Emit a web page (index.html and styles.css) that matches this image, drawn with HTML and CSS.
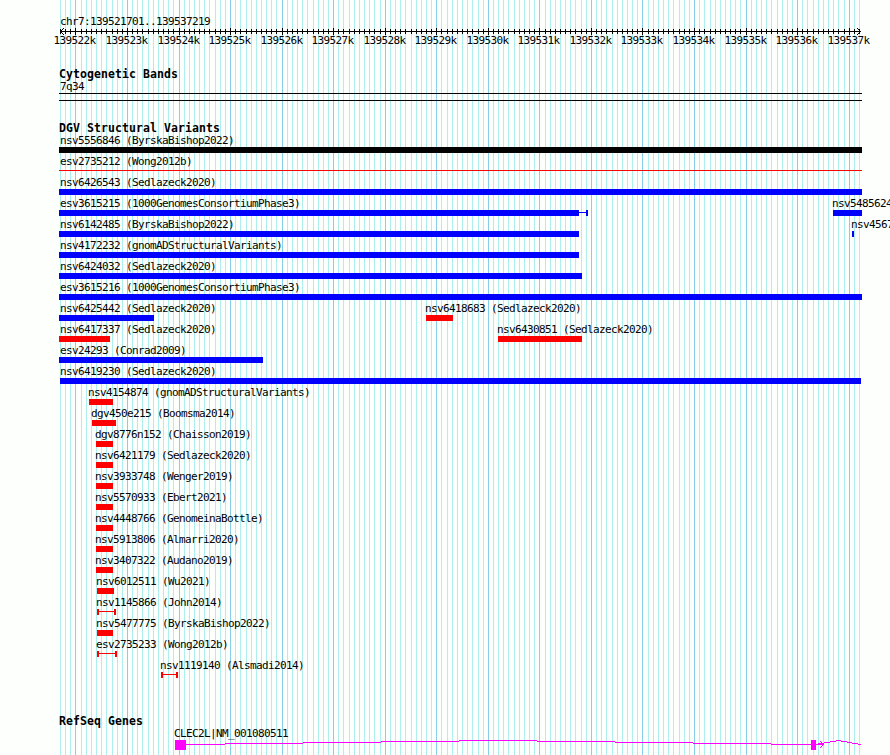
FILE: index.html
```
<!DOCTYPE html>
<html lang="en">
<head>
<meta charset="utf-8">
<title>chr7:139521701..139537219</title>
<link rel="stylesheet" href="styles.css">
</head>
<body>
<main class="browser">
  <svg class="grid" width="890" height="755" shape-rendering="crispEdges" aria-hidden="true">
    <path class="minor" id="minor"/>
    <path class="major" id="major"/>
  </svg>
  <header class="ruler">
    <div class="region">chr7:139521701..139537219</div>
    <svg class="axis" width="890" height="9" shape-rendering="crispEdges">
      <path id="ticks" class="ink"/>
      <path class="ink" d="M60 4h801v1h-801zM61 3h1v3h-1zM62 2h1v1h-1zM62 6h1v1h-1zM63 1h1v1h-1zM63 7h1v1h-1zM859 3h1v3h-1zM858 2h1v1h-1zM858 6h1v1h-1zM857 1h1v1h-1zM857 7h1v1h-1z"/>
    </svg>
    <div class="scale" id="scale"></div>
  </header>
  <section class="cyto">
    <h2>Cytogenetic Bands</h2>
    <div class="name">7q34</div>
    <div class="band"></div>
  </section>
  <section class="variants">
    <h2>DGV Structural Variants</h2>
    <div id="rows"></div>
  </section>
  <section class="genes">
    <h2>RefSeq Genes</h2>
    <div class="gene-name">CLEC2L|NM_001080511</div>
    <svg class="gene" width="890" height="12" shape-rendering="crispEdges">
      <path d="M175 1h11v10h-11zM811 1h5v10h-5zM186 5h39v1h-39zM225 4h78v1h-78zM303 3h78v1h-78zM381 2h78v1h-78zM459 1h78v1h-78zM537 2h78v1h-78zM615 3h78v1h-78zM693 4h78v1h-78zM771 5h40v1h-40zM816 5h8v1h-8zM818 4h6v1h-6zM824 3h6v1h-6zM830 2h6v1h-6zM836 1h5v1h-5zM841 2h6v1h-6zM847 3h5v1h-5zM852 4h6v1h-6zM858 5h3v1h-3zM820 2h1v1h-1zM821 3h1v1h-1zM822 6h1v1h-1zM821 7h1v1h-1zM820 8h1v1h-1z"/>
    </svg>
  </section>
</main>
<script src="tracks.js"></script>
</body>
</html>
```
FILE: styles.css
```
body {
  margin: 0;
  background: #fdfffc;
  color: #000;
  font-family: "DejaVu Sans Mono", "Liberation Mono", monospace;
  font-size: 11px;
  line-height: 13px;
  letter-spacing: -0.622px;
}

.browser {
  position: relative;
  width: 890px;
  height: 755px;
  overflow: hidden;
  white-space: nowrap;
}

.browser > * { position: relative; }

.browser > .grid {
  position: absolute;
  inset: 0;
}

svg { display: block; }
.minor { fill: #afeeee; }
.major { fill: #87ceeb; }
.ink { fill: #000; }

.ruler { padding-top: 15px; }
.region { padding-left: 60px; height: 12px; }
.scale { display: grid; margin-top: -2px; }

.scale span {
  grid-area: 1 / 1;
  margin-left: var(--x);
}

h2 {
  margin: 0;
  padding-left: 59px;
  font-size: 11.5px;
  line-height: 13px;
  letter-spacing: 0.077px;
}

.cyto { padding-top: 21px; }
.name { padding-left: 60px; margin-top: -1px; }

.band {
  width: 803px;
  height: 6px;
  margin: 0 0 0 59px;
  border: solid #000;
  border-width: 1px 0;
}

.variants { padding-top: 21px; }

.row {
  display: grid;
  height: 21px;
}

#rows { margin-top: -1px; }

.feature {
  grid-area: 1 / 1;
  width: 0;
  margin-left: var(--x);
}

.label { margin-left: var(--shift); }

.bar {
  width: var(--w);
  height: 6px;
  background: var(--ink);
}

.line .bar {
  height: 1px;
  margin-top: 2px;
}

.range .bar {
  display: flex;
  justify-content: space-between;
  background: linear-gradient(var(--ink), var(--ink)) 0 2px / 100% 1px no-repeat;
}

.range .bar::before,
.range .bar::after {
  content: "";
  width: 2px;
  background: var(--ink);
}

.range .bar::before { width: var(--core); }

.blue { --ink: #00f; }
.red { --ink: #f00; }
.black { --ink: #000; }

.genes { padding-top: 35px; }
.gene-name { padding-left: 174px; margin-top: -1px; }
.gene { fill: #f0f; margin-top: -1px; }
```
FILE: tracks.js
```
// Horizontal scale: 800px spans 15518 bases, one grid line every 100 bases.
const STEP = 80000 / 15518;
let minor = '', major = '', ticks = '', scale = '';
for (let i = -3; i <= 152; i++) {
  const x = Math.floor(75.914 + STEP * i);
  if (i % 10) {
    minor += `M${x} 0h1v755h-1z`;
    ticks += `M${x} 2h1v5h-1z`;
  } else {
    major += `M${x} 0h1v755h-1z`;
    ticks += `M${x} 1h1v7h-1z`;
    scale += `<span style="--x:${x - 21.5}px">${139522 + i / 10}k</span>`;
  }
}
document.getElementById('minor').setAttribute('d', minor);
document.getElementById('major').setAttribute('d', major);
document.getElementById('ticks').setAttribute('d', ticks);
document.getElementById('scale').innerHTML = scale;

// Each row lists features as [name, start, end, style, width of left block].
const rows = [
  [['nsv5556846 (ByrskaBishop2022)', 59, 862, 'black']],
  [['esv2735212 (Wong2012b)', 59, 862, 'red line']],
  [['nsv6426543 (Sedlazeck2020)', 59, 862, 'blue']],
  [['esv3615215 (1000GenomesConsortiumPhase3)', 59, 588, 'blue range', 520], ['nsv5485624', 833, 862, 'blue']],
  [['nsv6142485 (ByrskaBishop2022)', 59, 579, 'blue'], ['nsv4567', 852, 854, 'blue']],
  [['nsv4172232 (gnomADStructuralVariants)', 59, 579, 'blue']],
  [['nsv6424032 (Sedlazeck2020)', 59, 582, 'blue']],
  [['esv3615216 (1000GenomesConsortiumPhase3)', 59, 862, 'blue']],
  [['nsv6425442 (Sedlazeck2020)', 59, 154, 'blue'], ['nsv6418683 (Sedlazeck2020)', 426, 453, 'red']],
  [['nsv6417337 (Sedlazeck2020)', 59, 110, 'red'], ['nsv6430851 (Sedlazeck2020)', 498, 582, 'red']],
  [['esv24293 (Conrad2009)', 59, 263, 'blue']],
  [['nsv6419230 (Sedlazeck2020)', 60, 861, 'blue']],
  [['nsv4154874 (gnomADStructuralVariants)', 89, 113, 'red']],
  [['dgv450e215 (Boomsma2014)', 92, 116, 'red']],
  [['dgv8776n152 (Chaisson2019)', 96, 113, 'red']],
  [['nsv6421179 (Sedlazeck2020)', 96, 113, 'red']],
  [['nsv3933748 (Wenger2019)', 96, 113, 'red']],
  [['nsv5570933 (Ebert2021)', 96, 113, 'red']],
  [['nsv4448766 (GenomeinaBottle)', 96, 113, 'red']],
  [['nsv5913806 (Almarri2020)', 96, 113, 'red']],
  [['nsv3407322 (Audano2019)', 96, 113, 'red']],
  [['nsv6012511 (Wu2021)', 97, 114, 'red']],
  [['nsv1145866 (John2014)', 97, 116, 'red range', 2]],
  [['nsv5477775 (ByrskaBishop2022)', 97, 113, 'red']],
  [['esv2735233 (Wong2012b)', 97, 117, 'red range', 2]],
  [['nsv1119140 (Alsmadi2014)', 161, 178, 'red range', 2]]
];
const labelShift = start => start === 59 ? 1 : start === 60 ? 0 : -1;
document.getElementById('rows').innerHTML = rows.map(row =>
  '<div class="row">' + row.map(([name, start, end, style, core = 0]) =>
    `<div class="feature ${style}" style="--x:${start}px;--w:${end - start}px;--core:${core}px;--shift:${labelShift(start)}px">` +
    `<div class="label">${name}</div><div class="bar"></div></div>`).join('') + '</div>').join('');
```
